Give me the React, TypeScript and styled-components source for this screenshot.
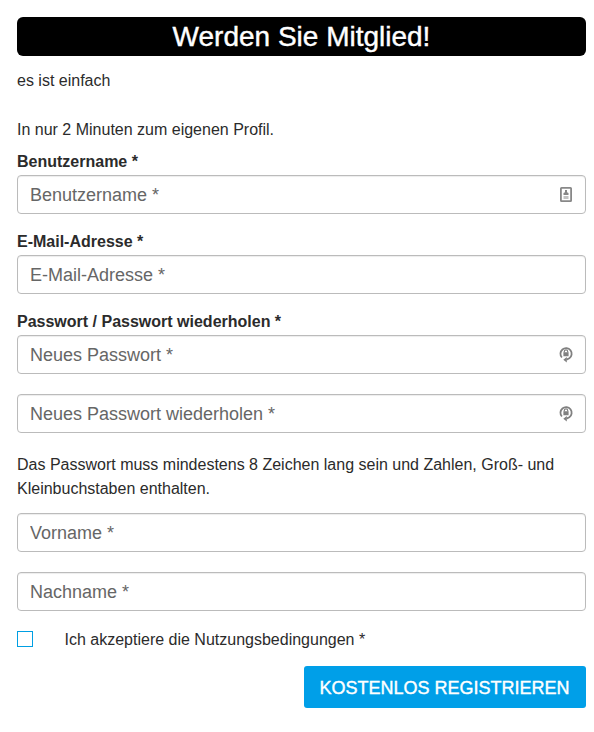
import React from 'react';
import styled, { createGlobalStyle } from 'styled-components';

const GlobalStyle = createGlobalStyle`
  * { box-sizing: border-box; }
  body { margin: 0; background: #fff; color: #2b2b2b; font: 16px/24px "Liberation Sans", Arial, sans-serif; }
`;
const Page = styled.main`
  width: 594px;
  height: 732px;
  padding: 17px 8px 0 17px;
  overflow: hidden;
`;
const Title = styled.h1`
  margin: 0 0 13px;
  height: 39px;
  border-radius: 6px;
  background: #000;
  color: #fff;
  font-size: 28px;
  font-weight: 400;
  line-height: 39px;
  text-align: center;
  -webkit-text-stroke: 0.4px #fff;
`;
const Text = styled.p<{ $gap: number }>`
  margin: 0 0 ${(p) => p.$gap}px;
`;
const Label = styled.label`
  display: block;
  height: 25px;
  font-weight: 700;
`;
const Field = styled.div<{ $gap?: number }>`
  display: flex;
  align-items: center;
  height: 39px;
  margin-bottom: ${(p) => p.$gap ?? 20}px;
  padding: 0 12px;
  border: 1px solid #bbb;
  border-radius: 4px;
  background: #fff;
  box-shadow: inset 0 1px 1px rgba(0, 0, 0, 0.075);
`;
const Input = styled.input`
  flex: 1;
  min-width: 0;
  padding: 0;
  border: 0;
  outline: 0;
  background: transparent;
  color: #555;
  font: 18px/24px "Liberation Sans", Arial, sans-serif;
  &::placeholder { color: #666; opacity: 1; }
`;
const Terms = styled.label`
  display: flex;
  align-items: flex-start;
  height: 24px;
  margin-bottom: 14px;
  gap: 31.5px;
`;
const Checkbox = styled.input`
  appearance: none;
  width: 16px;
  height: 16px;
  margin: 3px 0 0;
  border: 1px solid #009fe3;
`;
const Actions = styled.div`
  display: flex;
  justify-content: flex-end;
`;
const Button = styled.button`
  width: 282px;
  height: 42px;
  padding: 2px 1px 0 0;
  border: 0;
  border-radius: 3px;
  background: #009fe8;
  color: #fff;
  font: 18px "Liberation Sans", Arial, sans-serif;
  -webkit-text-stroke: 0.4px #fff;
`;

const CardIcon = () => (
  <svg width="14" height="18" viewBox="0 0 14 18" fill="#888">
    <rect x="1.900" y="1.900" width="10.200" height="13.200" rx="0.6" fill="none" stroke="#888" strokeWidth="1.800" />
    <path d="M6 4h2v2.200L9.500 7v2h-5V7L6 6.200z" />
    <path d="M4.500 10h5v3h-5z" opacity="0.5" />
  </svg>
);
const LockIcon = () => (
  <svg width="14" height="18" viewBox="0 0 14 18" fill="#808080">
    <path d="M2.900 11.500A5.600 5.600 0 1 1 10.300 12.300L7.500 13.600" fill="none" stroke="#808080" strokeWidth="1.800" />
    <path d="M5.300 6.500V5.500a1.700 1.700 0 0 1 3.400 0v1" fill="none" stroke="#808080" strokeWidth="1.200" />
    <path d="M4.400 6.200h5.200v4H4.400zM7.800 11v5.500L4.300 13.700z" />
  </svg>
);

export default function App() {
  return (
    <Page>
      <GlobalStyle />
      <Title>Werden Sie Mitglied!</Title>
      <Text $gap={25}>es ist einfach</Text>
      <Text $gap={8}>In nur 2 Minuten zum eigenen Profil.</Text>
      <Label>Benutzername *</Label>
      <Field $gap={16}><Input placeholder="Benutzername *" /><CardIcon /></Field>
      <Label>E-Mail-Adresse *</Label>
      <Field $gap={16}><Input placeholder="E-Mail-Adresse *" /></Field>
      <Label>Passwort / Passwort wiederholen *</Label>
      <Field><Input placeholder="Neues Passwort *" /><LockIcon /></Field>
      <Field><Input placeholder="Neues Passwort wiederholen *" /><LockIcon /></Field>
      <Text $gap={12}>Das Passwort muss mindestens 8 Zeichen lang sein und Zahlen, Groß- und Kleinbuchstaben enthalten.</Text>
      <Field><Input placeholder="Vorname *" /></Field>
      <Field $gap={17}><Input placeholder="Nachname *" /></Field>
      <Terms><Checkbox type="checkbox" /><span>Ich akzeptiere die Nutzungsbedingungen *</span></Terms>
      <Actions><Button>KOSTENLOS REGISTRIEREN</Button></Actions>
    </Page>
  );
}
